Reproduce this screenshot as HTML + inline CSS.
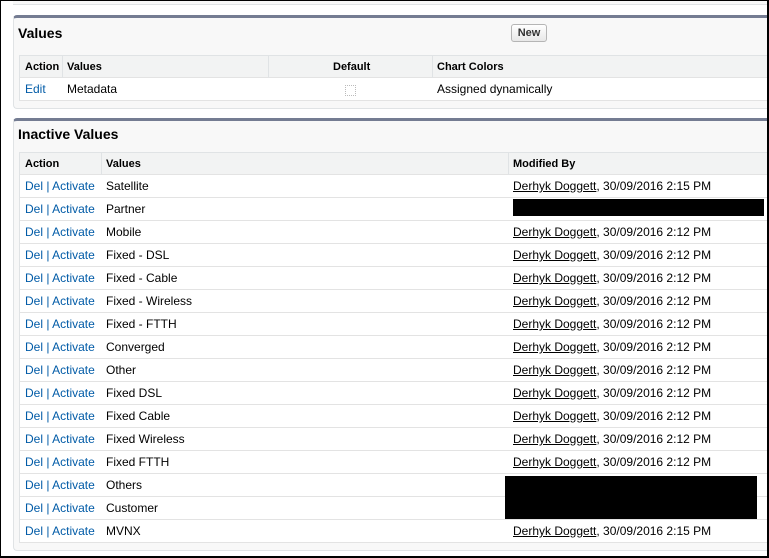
<!DOCTYPE html>
<html><head><meta charset="utf-8"><style>
*{margin:0;padding:0;box-sizing:border-box}
body{width:769px;height:558px;background:#fff;font-family:"Liberation Sans",Arial,sans-serif;font-size:12px;color:#000;position:relative;overflow:hidden}
.frame{position:absolute;left:0;top:0;width:769px;height:558px;border:1px solid #000;border-right:2px solid #000;border-bottom:2px solid #000;pointer-events:none;z-index:5}
.panel{position:absolute;left:13px;width:760px;background:#f8f8f8;border-top:3px solid #747c92;border-left:1px solid #e0e3e5;border-bottom:1px solid #e0e3e5;border-radius:4px 0 0 4px}
.title{position:absolute;left:4px;font-weight:bold;font-size:14px}
.row{position:absolute;left:5px;width:760px;height:23px;background:#fff;border-bottom:1px solid #e3e3e3;border-left:1px solid #e0e3e5}
.hdr{background:#f2f3f3;border-top:1px solid #e0e3e5;font-weight:bold;font-size:11px;height:23px}
.c{position:absolute;top:4px;white-space:nowrap}
.hdr .c{top:5px}
a,.l{color:#015ba7;text-decoration:none}
.u{text-decoration:underline;color:#000}
.sep{position:absolute;top:0;height:22px;border-left:1px solid #e0e3e5}
.btn{position:absolute;left:497px;top:6px;width:36px;height:18px;border:1px solid #b5b5b5;border-radius:3px;background:linear-gradient(#fff,#e8e8e8);font-weight:bold;font-size:11px;text-align:center;line-height:16px;color:#333}
.blk{position:absolute;background:#000}
</style></head><body>
<div style="position:absolute;left:13px;top:0;width:760px;height:5px;background:#f8f8f8;border-bottom:1px solid #e0e3e5"></div>

<div class="panel" style="top:15px;height:94px">
  <div class="title" style="top:7px">Values</div>
  <div class="btn">New</div>
  <div class="row hdr" style="top:37px">
    <span class="c" style="left:5px">Action</span><div class="sep" style="left:42px"></div>
    <span class="c" style="left:47px">Values</span><div class="sep" style="left:248px"></div>
    <span class="c" style="left:313px">Default</span><div class="sep" style="left:412px"></div>
    <span class="c" style="left:417px">Chart Colors</span>
  </div>
  <div class="row" style="top:60px">
    <span class="c l" style="left:5px">Edit</span>
    <span class="c" style="left:47px">Metadata</span>
    <span style="position:absolute;left:325px;top:7px;width:11px;height:11px;border:1px dotted #bbb"></span>
    <span class="c" style="left:417px">Assigned dynamically</span>
  </div>
</div>

<div class="panel" style="top:118px;height:433px">
  <div class="title" style="top:5px">Inactive Values</div>
  <div class="row hdr" style="top:31px">
    <span class="c" style="left:5px">Action</span><div class="sep" style="left:81px"></div>
    <span class="c" style="left:86px">Values</span><div class="sep" style="left:488px"></div>
    <span class="c" style="left:493px">Modified By</span>
  </div>
  <div id="rows"></div>
</div>
<script>
var v=["Satellite","Partner","Mobile","Fixed - DSL","Fixed - Cable","Fixed - Wireless","Fixed - FTTH","Converged","Other","Fixed DSL","Fixed Cable","Fixed Wireless","Fixed FTTH","Others","Customer","MVNX"];
var h="";
v.forEach(function(n,i){
 var m="";
 if(n!="Partner"&&n!="Others"&&n!="Customer"){m='<span class="c" style="left:493px"><span class="u">Derhyk Doggett</span>, 30/09/2016 '+((i==0||i==15)?'2:15':'2:12')+' PM</span>';}
 h+='<div class="row" style="top:'+(54+i*23)+'px"><span class="c l" style="left:5px">Del | Activate</span><span class="c" style="left:86px">'+n+'</span>'+m+'</div>';
});
document.getElementById("rows").innerHTML=h;
</script>
<div class="blk" style="left:513px;top:199px;width:251px;height:17px"></div>
<div class="blk" style="left:505px;top:476px;width:252px;height:43px"></div>
<div class="frame"></div>
</body></html>
